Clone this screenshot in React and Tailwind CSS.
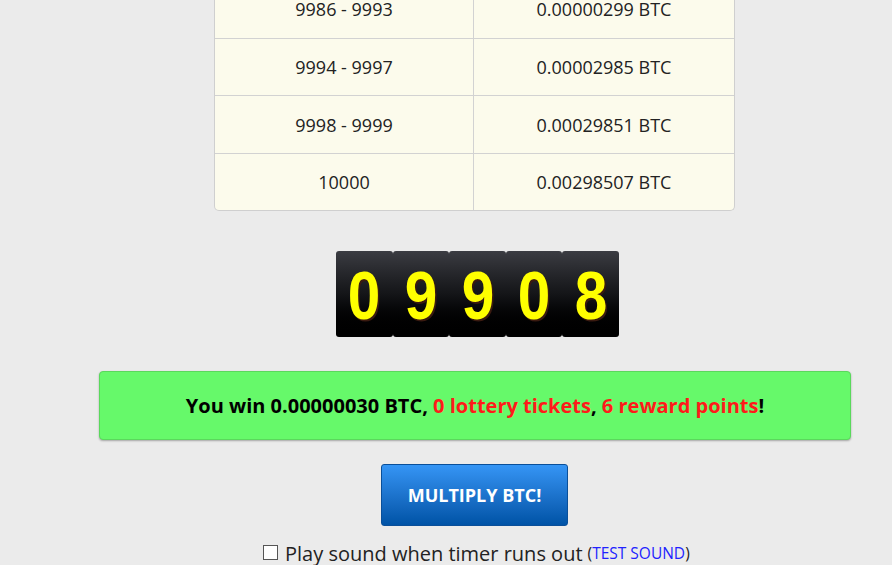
const rows = [
  ["9986 - 9993", "0.00000299 BTC"],
  ["9994 - 9997", "0.00002985 BTC"],
  ["9998 - 9999", "0.00029851 BTC"],
  ["10000", "0.00298507 BTC"],
];

const digits = ["0", "9", "9", "0", "8"];

export default function App() {
  return (
    <div
      className="w-[892px] h-[565px] overflow-hidden bg-[#ebebeb] text-[#222]"
      style={{ fontFamily: '"Open Sans", sans-serif' }}
    >
      <div className="ml-[214px] mt-[-20px] w-[521px] rounded-b-[5px] border border-[#cfcfcf] border-t-0 bg-[#fcfbec] overflow-hidden">
        {rows.map((r, i) => (
          <div
            key={i}
            className={`flex h-[57.5px] text-[18px] ${
              i > 0 ? "border-t border-[#d2d2d2]" : ""
            }`}
          >
            <div className="w-[259px] flex items-center justify-center border-r border-[#d2d2d2]">
              <span className="mt-[2px]">{r[0]}</span>
            </div>
            <div className="flex-1 flex items-center justify-center">
              <span className="mt-[2px]">{r[1]}</span>
            </div>
          </div>
        ))}
      </div>

      <div className="flex ml-[336px] mt-[40px] h-[86px] w-fit">
        {digits.map((d, i) => (
          <div
            key={i}
            className="w-[56.6px] flex items-center justify-center rounded-[3px] bg-gradient-to-b from-[#3b3c42] via-[#141518] to-[#000]"
          >
            <span
              className="text-[68px] leading-none font-bold text-[#ffff00] mt-[2px] scale-x-[0.86]"
              style={{
                fontFamily: '"Liberation Sans", Arial, sans-serif',
                textShadow: "2px 2px 0 #3a1a10",
              }}
            >
              {d}
            </span>
          </div>
        ))}
      </div>

      <div className="ml-[99px] mt-[34px] w-[752px] h-[69px] rounded-[4px] bg-[#66f96a] border border-[#5ad85c] shadow-[0_1px_2px_rgba(0,0,0,0.3)] flex items-center justify-center text-[20px] font-bold text-black">
        <span>
          You win 0.00000030 BTC, <span className="text-[#ff1a1a]">0 lottery tickets</span>,{" "}
          <span className="text-[#ff1a1a]">6 reward points</span>!
        </span>
      </div>

      <div className="ml-[381px] mt-[24px]">
        <button className="w-[187px] h-[62px] rounded-[3px] border border-[#0a4f99] bg-gradient-to-b from-[#3595f5] to-[#0053a6] text-white font-bold text-[18px]">
          MULTIPLY BTC!
        </button>
      </div>

      <div className="flex items-center ml-[263px] mt-[13px] text-[20px] text-[#222] whitespace-nowrap">
        <span className="inline-block w-[15px] h-[15px] border border-[#555] bg-white mr-[7px] mb-[4px]" />
        <span>Play sound when timer runs out</span>
        <span className="text-[15.5px] ml-[5px]">
          (<span className="text-[#2222ff]">TEST SOUND</span>)
        </span>
      </div>
    </div>
  );
}
